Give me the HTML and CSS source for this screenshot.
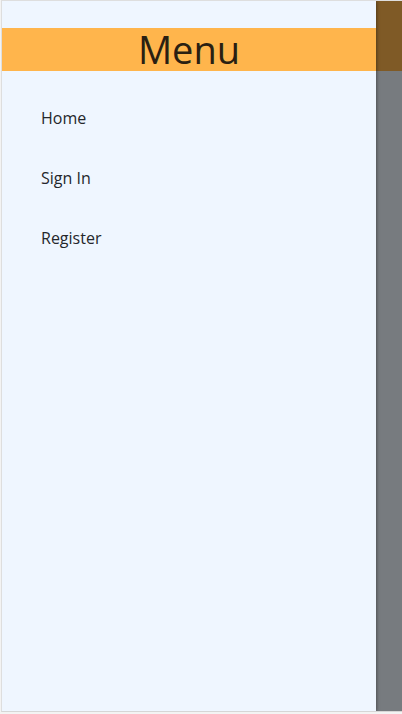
FILE: index.html
```html
<!DOCTYPE html>
<html>
<head>
<meta charset="utf-8">
<link rel="stylesheet" href="styles.css">
</head>
<body>
<div class="frame">
  <div class="page">
    <header class="page-header"></header>
  </div>
  <div class="overlay"></div>
  <nav class="drawer">
    <div class="drawer-title">Menu</div>
    <ul class="drawer-list">
      <li class="drawer-item">Home</li>
      <li class="drawer-item">Sign In</li>
      <li class="drawer-item">Register</li>
    </ul>
  </nav>
</div>
</body>
</html>
```
FILE: styles.css
```css
html, body {
  margin: 0;
  padding: 0;
  background: #f3f3f3;
}
.frame {
  position: relative;
  height: 710px;
  margin-left: 1px;
  border-top: 1px solid #dedede;
  border-left: 1px solid #dedede;
  border-bottom: 1px solid #d6d6d6;
  background: #eff6ff;
  overflow: hidden;
  font-family: "Open Sans", "Noto Sans", sans-serif;
}
.page-header {
  height: 70px;
  background: #ffb54c;
}
.overlay {
  position: absolute;
  inset: -1px 0 0 0;
  background: rgba(0, 0, 0, 0.5);
}
.drawer {
  position: absolute;
  top: 0;
  left: 0;
  bottom: 0;
  width: 374px;
  background: #eff6ff;
  box-shadow: 1px 0 3px rgba(0, 0, 0, 0.35);
}
.drawer-title {
  margin-top: 27px;
  height: 43px;
  background: #ffb54c;
  color: #2a1f12;
  font-size: 38px;
  line-height: 43px;
  text-align: center;
}
.drawer-title span {
  display: inline-block;
}
.drawer-list {
  list-style: none;
  margin: 0;
  padding: 36px 0 0 39px;
}
.drawer-item {
  height: 60px;
  font-size: 16px;
  line-height: 22px;
  color: #25272b;
}
```
